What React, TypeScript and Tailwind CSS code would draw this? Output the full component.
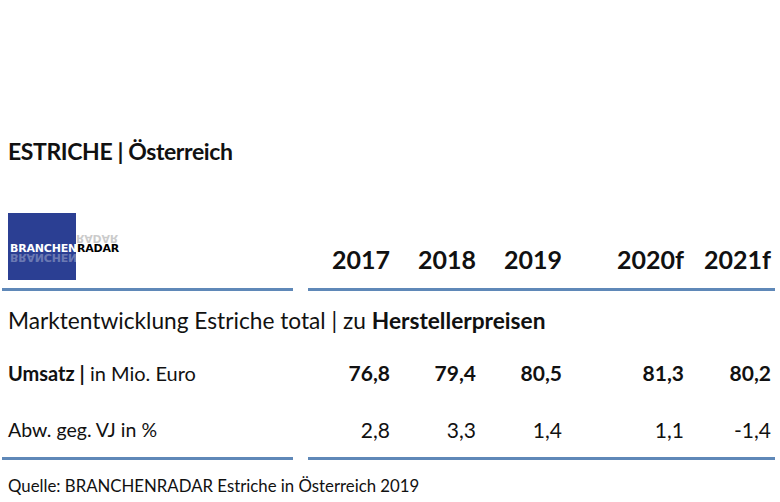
import React from 'react';

const years = ['2017', '2018', '2019', '2020f', '2021f'];
const umsatz = ['76,8', '79,4', '80,5', '81,3', '80,2'];
const abw = ['2,8', '3,3', '1,4', '1,1', '-1,4'];

const cols = 'grid grid-cols-[300px_90px_86px_86px_122px_87px]';

function Logo() {
    return (
        <div className="relative w-[68px] h-[67px] bg-[#2b3f93]">
            {/* mirrored ghost text */}
            <div className="absolute left-[2px] top-[39px] flex text-[11px] font-bold leading-[11px] font-['DejaVu_Sans',sans-serif] tracking-[-0.2px] scale-y-[-1] opacity-30">
                <span className="text-white">BRANCHEN</span>
            </div>
            <div className="absolute left-[68px] top-[20px] flex text-[11px] font-bold leading-[11px] font-['DejaVu_Sans',sans-serif] tracking-[-0.2px] scale-y-[-1] opacity-20">
                <span className="text-black">RADAR</span>
            </div>
            <div className="absolute left-[2px] top-[30px] flex text-[11px] font-bold leading-[11px] font-['DejaVu_Sans',sans-serif] tracking-[-0.2px] whitespace-nowrap">
                <span className="text-white">BRANCHEN</span>
                <span className="text-black">RADAR</span>
            </div>
        </div>
    );
}

function Rule() {
    return (
        <div className="flex">
            <div className="ml-[2px] w-[291px] h-[3px] bg-[#5f88b8]" />
            <div className="ml-[15px] w-[467px] h-[3px] bg-[#5f88b8]" />
        </div>
    );
}

export default function App() {
    return (
        <div className="w-[780px] h-[502px] bg-white text-[#111] font-['Lato',sans-serif] overflow-hidden">
            <div className="pt-[134px] pl-[8px] text-[23px] font-bold leading-[34px] tracking-[-0.4px]">
                ESTRICHE | Österreich
            </div>

            <div className={`${cols} mt-[45px] items-end`}>
                <div className="pl-[8px]">
                    <Logo />
                </div>
                {years.map(y => (
                    <div key={y} className="text-right text-[25px] font-bold leading-[28px] pb-[7px]">
                        {y}
                    </div>
                ))}
            </div>

            <div className="mt-[8px]">
                <Rule />
            </div>

            <div className="mt-[15px] pl-[8px] text-[22.7px] leading-[30px]">
                Marktentwicklung Estriche total | zu <span className="font-bold">Herstellerpreisen</span>
            </div>

            <div className={`${cols} mt-[22px] text-[21px] leading-[30px]`}>
                <div className="pl-[8px] text-[20px]">
                    <span className="font-bold">Umsatz |</span> in Mio. Euro
                </div>
                {umsatz.map((v, i) => (
                    <div key={i} className="text-right font-bold">{v}</div>
                ))}
            </div>

            <div className={`${cols} mt-[27px] text-[21px] leading-[30px]`}>
                <div className="pl-[8px] text-[19.5px]">Abw. geg. VJ in %</div>
                {abw.map((v, i) => (
                    <div key={i} className="text-right">{v}</div>
                ))}
            </div>

            <div className="mt-[12px]">
                <Rule />
            </div>

            <div className="mt-[14px] pl-[8px] text-[16.8px] leading-[24px]">
                Quelle: BRANCHENRADAR Estriche in Österreich 2019
            </div>
        </div>
    );
}
